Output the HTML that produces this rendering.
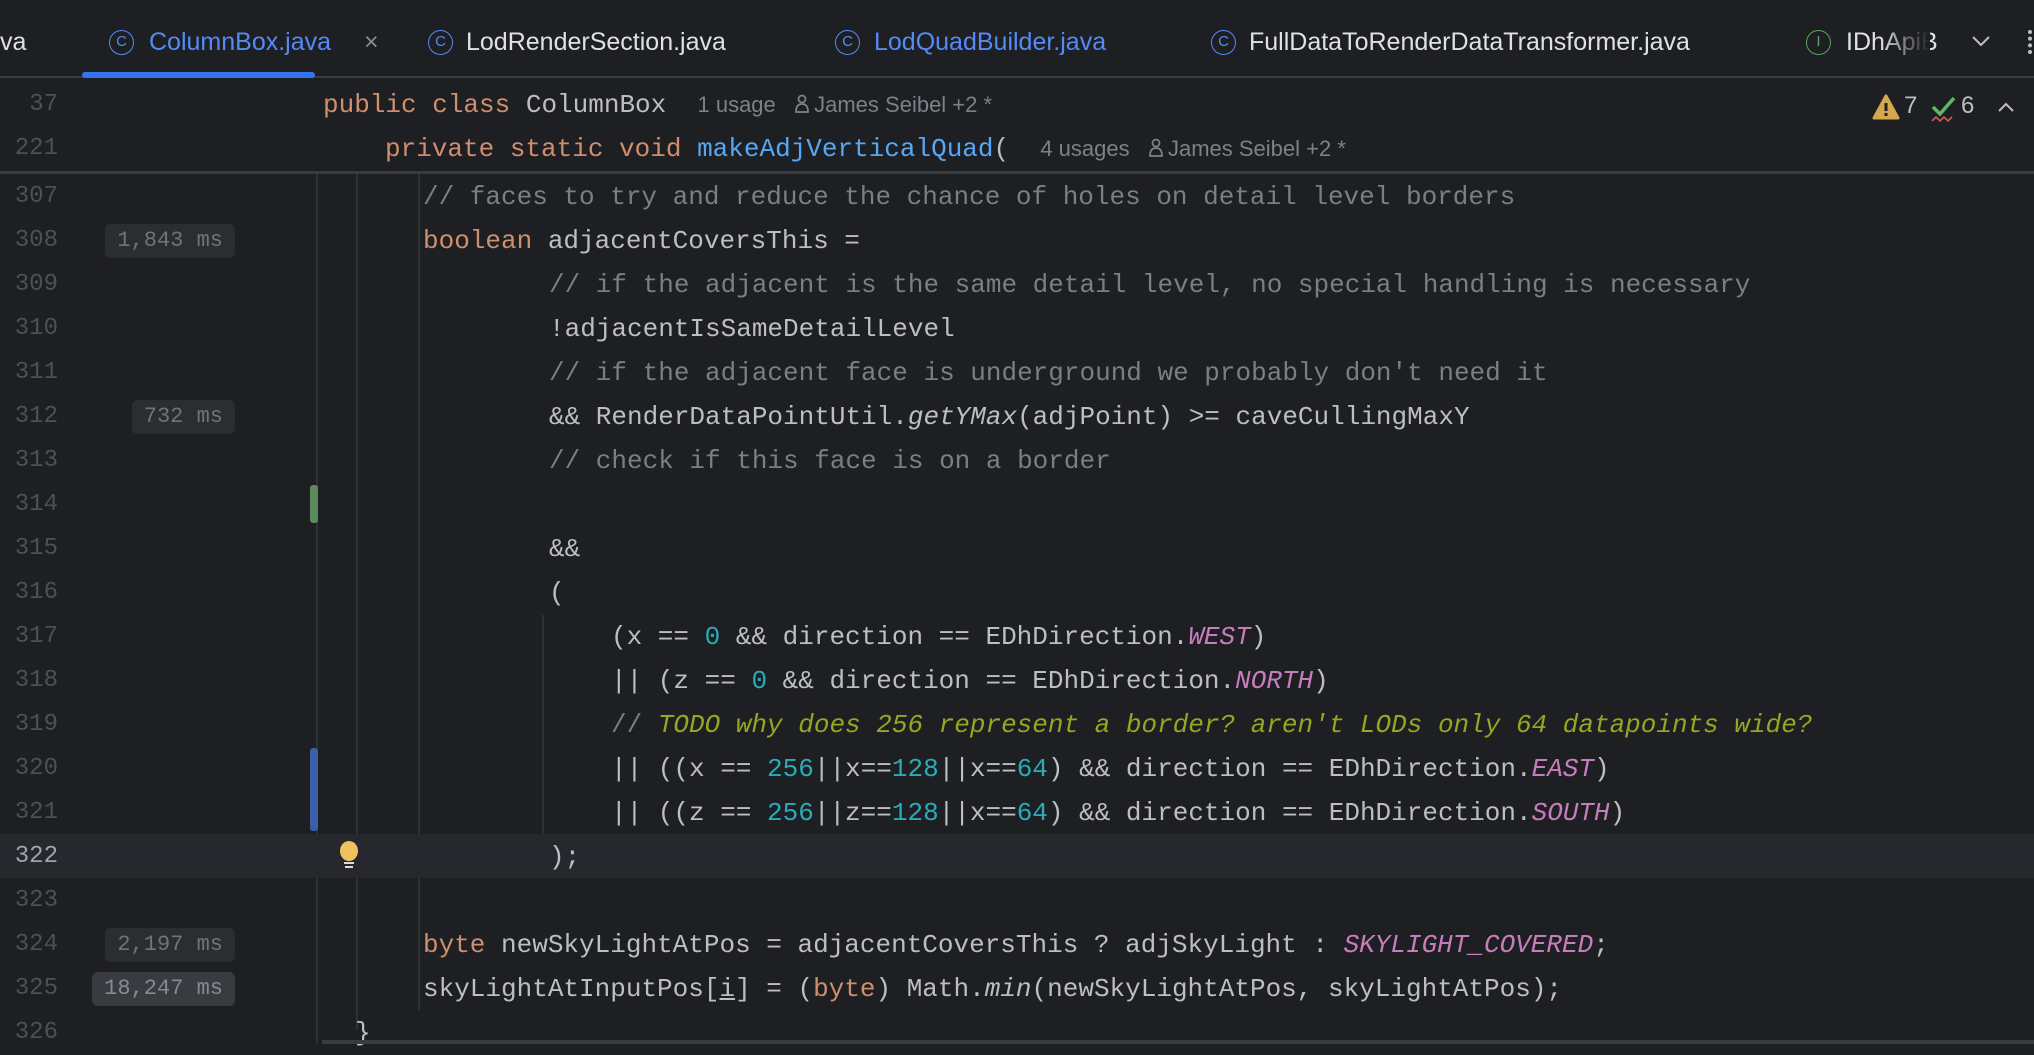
<!DOCTYPE html>
<html><head><meta charset="utf-8"><style>
*{margin:0;padding:0;box-sizing:border-box}
body{width:2034px;height:1044px;background:#1e1f22;overflow:hidden;position:relative;font-family:"Liberation Mono",monospace;color:#bcbec4}
.a{position:absolute;white-space:pre}
.tab{position:absolute;top:28px;font-family:"Liberation Sans",sans-serif;font-size:25px;color:#dfe1e5;white-space:pre}
.ic{position:absolute;top:30px;width:25px;height:25px;border:1.6px solid #548af7;border-radius:50%;font-family:"Liberation Sans",sans-serif;font-size:15px;color:#548af7;text-align:center;line-height:22px}
.c{font-size:26px;height:44px;line-height:44px}
.ln{position:absolute;left:0;width:58px;text-align:right;font-size:24px;color:#4b5059;line-height:44px;height:44px}
.k{color:#cf8e6d}.m{color:#56a8f5}.n{color:#2aacb8}.cm{color:#7a7e85}.p{color:#c77dbb;font-style:italic}.t{color:#a8c023;font-style:italic;opacity:.85}.it{font-style:italic}
.b{position:absolute;right:1799px;height:34px;line-height:34px;background:#2b2d30;border-radius:6px;color:#6f737a;font-size:22px;padding:0 12px}
.hint{font-family:"Liberation Sans",sans-serif;font-size:22px;color:#7c8088}
.vl{position:absolute;width:2px;background:#2e3034}
.pi{display:inline-block;vertical-align:-2px;margin-right:4px}
</style></head><body>
<div class="tab" style="left:0;color:#dfe1e5">va</div>
<div class="ic" style="left:109px">C</div>
<div class="tab" style="left:149px;color:#548af7">ColumnBox.java</div>
<div class="tab" style="left:364px;color:#868a91">×</div>
<div class="ic" style="left:428px">C</div>
<div class="tab" style="left:466px">LodRenderSection.java</div>
<div class="ic" style="left:835px">C</div>
<div class="tab" style="left:874px;color:#548af7">LodQuadBuilder.java</div>
<div class="ic" style="left:1211px">C</div>
<div class="tab" style="left:1249px">FullDataToRenderDataTransformer.java</div>
<div class="ic" style="left:1806px;border-color:#5fa05f;color:#5fa05f">I</div>
<div class="tab" style="left:1846px">IDhApiB</div>
<div style="position:absolute;left:1880px;top:20px;width:50px;height:44px;background:linear-gradient(90deg,rgba(30,31,34,0),#1e1f22)"></div>
<svg class="a" style="left:1970px;top:34px" width="22" height="14"><path d="M3 3 L11 11 L19 3" stroke="#bcbec4" stroke-width="2" fill="none"/></svg>
<div style="position:absolute;left:2028px;top:30px;width:4px;height:24px;border-left:4px dotted #bcbec4"></div>
<div style="position:absolute;left:0;top:76px;width:2034px;height:2px;background:#393b40"></div>
<div style="position:absolute;left:82px;top:72px;width:233px;height:6px;background:#3574f0;border-radius:3px"></div>
<div class="ln" style="top:83px">37</div>
<div class="a c" style="left:323px;top:83px"><span class="k">public class </span>ColumnBox  <span class="hint">1 usage   <svg class="pi" width="16" height="20"><circle cx="8" cy="5" r="3.5" stroke="#7c8088" stroke-width="1.8" fill="none"/><path d="M2 18 Q2 10 8 10 Q14 10 14 18 Z" stroke="#7c8088" stroke-width="1.8" fill="none"/></svg>James Seibel +2 *</span></div>
<div class="ln" style="top:127px">221</div>
<div class="a c" style="left:385px;top:127px"><span class="k">private static void </span><span class="m">makeAdjVerticalQuad</span>(  <span class="hint">4 usages   <svg class="pi" width="16" height="20"><circle cx="8" cy="5" r="3.5" stroke="#7c8088" stroke-width="1.8" fill="none"/><path d="M2 18 Q2 10 8 10 Q14 10 14 18 Z" stroke="#7c8088" stroke-width="1.8" fill="none"/></svg>James Seibel +2 *</span></div>
<div style="position:absolute;left:0;top:171px;width:2034px;height:3px;background:#393b40"></div>
<svg class="a" style="left:1872px;top:94px" width="28" height="26"><path d="M14 2 L26 24 H2 Z" fill="#d4a84e" stroke="#d4a84e" stroke-width="3" stroke-linejoin="round"/><rect x="12.5" y="9" width="3" height="8" fill="#1e1f22"/><rect x="12.5" y="19" width="3" height="3" fill="#1e1f22"/></svg>
<div class="a hint" style="left:1904px;top:92px;font-size:24px;color:#bcbec4">7</div>
<svg class="a" style="left:1930px;top:95px" width="28" height="28"><path d="M3 12 L10 19 L24 3" stroke="#5fb865" stroke-width="3.5" fill="none"/><path d="M2 26 L6 22 L10 26 L14 22 L18 26 L22 22" stroke="#d05a55" stroke-width="1.6" fill="none"/></svg>
<div class="a hint" style="left:1961px;top:92px;font-size:24px;color:#bcbec4">6</div>
<svg class="a" style="left:1997px;top:101px" width="18" height="12"><path d="M2 10 L9 3 L16 10" stroke="#bcbec4" stroke-width="2" fill="none"/></svg>
<div class="vl" style="left:316px;top:174px;height:870px"></div>
<div class="vl" style="left:356px;top:174px;height:856px"></div>
<div class="vl" style="left:418px;top:174px;height:836px"></div>
<div class="vl" style="left:542px;top:615px;height:220px"></div>
<div style="position:absolute;left:0;top:834px;width:2034px;height:44px;background:#26282e"></div>
<div style="position:absolute;left:310px;top:485px;width:8px;height:38px;background:#5c8a5c;border-radius:3px"></div>
<div style="position:absolute;left:310px;top:748px;width:8px;height:83px;background:#3d5fa8;border-radius:3px"></div>
<svg class="a" style="left:339px;top:841px" width="20" height="30"><ellipse cx="10" cy="10" rx="9" ry="10" fill="#eec35e"/><rect x="5" y="21" width="10" height="2" fill="#ddd"/><rect x="6" y="25" width="8" height="2" fill="#ddd"/></svg>
<div class="ln" style="top:175px">307</div>
<div class="ln" style="top:219px">308</div>
<div class="ln" style="top:263px">309</div>
<div class="ln" style="top:307px">310</div>
<div class="ln" style="top:351px">311</div>
<div class="ln" style="top:395px">312</div>
<div class="ln" style="top:439px">313</div>
<div class="ln" style="top:483px">314</div>
<div class="ln" style="top:527px">315</div>
<div class="ln" style="top:571px">316</div>
<div class="ln" style="top:615px">317</div>
<div class="ln" style="top:659px">318</div>
<div class="ln" style="top:703px">319</div>
<div class="ln" style="top:747px">320</div>
<div class="ln" style="top:791px">321</div>
<div class="ln" style="top:835px;color:#a1a3ab">322</div>
<div class="ln" style="top:879px">323</div>
<div class="ln" style="top:923px">324</div>
<div class="ln" style="top:967px">325</div>
<div class="ln" style="top:1011px">326</div>
<div class="b" style="top:224px">1,843 ms</div>
<div class="b" style="top:400px">732 ms</div>
<div class="b" style="top:928px">2,197 ms</div>
<div class="b" style="top:972px;background:#393b40;color:#868a91">18,247 ms</div>
<div class="a c cm" style="left:423px;top:175px">// faces to try and reduce the chance of holes on detail level borders</div>
<div class="a c" style="left:423px;top:219px"><span class="k">boolean</span> adjacentCoversThis =</div>
<div class="a c cm" style="left:549px;top:263px">// if the adjacent is the same detail level, no special handling is necessary</div>
<div class="a c" style="left:549px;top:307px">!adjacentIsSameDetailLevel</div>
<div class="a c cm" style="left:549px;top:351px">// if the adjacent face is underground we probably don't need it</div>
<div class="a c" style="left:549px;top:395px">&amp;&amp; RenderDataPointUtil.<span class="it">getYMax</span>(adjPoint) &gt;= caveCullingMaxY</div>
<div class="a c cm" style="left:549px;top:439px">// check if this face is on a border</div>
<div class="a c" style="left:549px;top:527px">&amp;&amp;</div>
<div class="a c" style="left:549px;top:571px">(</div>
<div class="a c" style="left:611px;top:615px">(x == <span class="n">0</span> &amp;&amp; direction == EDhDirection.<span class="p">WEST</span>)</div>
<div class="a c" style="left:611px;top:659px">|| (z == <span class="n">0</span> &amp;&amp; direction == EDhDirection.<span class="p">NORTH</span>)</div>
<div class="a c" style="left:611px;top:703px"><span class="cm">// </span><span class="t">TODO why does 256 represent a border? aren't LODs only 64 datapoints wide?</span></div>
<div class="a c" style="left:611px;top:747px">|| ((x == <span class="n">256</span>||x==<span class="n">128</span>||x==<span class="n">64</span>) &amp;&amp; direction == EDhDirection.<span class="p">EAST</span>)</div>
<div class="a c" style="left:611px;top:791px">|| ((z == <span class="n">256</span>||z==<span class="n">128</span>||x==<span class="n">64</span>) &amp;&amp; direction == EDhDirection.<span class="p">SOUTH</span>)</div>
<div class="a c" style="left:549px;top:835px">);</div>
<div class="a c" style="left:423px;top:923px"><span class="k">byte</span> newSkyLightAtPos = adjacentCoversThis ? adjSkyLight : <span class="p">SKYLIGHT_COVERED</span>;</div>
<div class="a c" style="left:423px;top:967px">skyLightAtInputPos[<u>i</u>] = (<span class="k">byte</span>) Math.<span class="it">min</span>(newSkyLightAtPos, skyLightAtPos);</div>
<div class="a c" style="left:355px;top:1011px">}</div>
<div style="position:absolute;left:322px;top:1040px;width:1712px;height:4px;background:#393b40"></div>
</body></html>
